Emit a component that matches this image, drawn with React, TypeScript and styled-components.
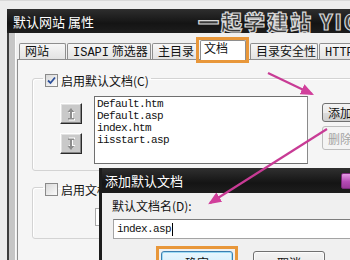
import React from "react";
import styled, { createGlobalStyle } from "styled-components";

const Global = createGlobalStyle`
  html, body { margin: 0; padding: 0; background: #ececec; }
  body {
    width: 350px; height: 260px; overflow: hidden;
    font-family: "Noto Sans CJK SC", "Liberation Sans", sans-serif;
  }
`;

const CJK = `"Noto Sans CJK SC", "Liberation Sans", sans-serif`;
const MONO = `"Liberation Mono", "Noto Sans CJK SC", monospace`;
const ORANGE = "#e8973a";

const Screen = styled.div`
  position: relative;
  width: 350px;
  height: 260px;
  overflow: hidden;
  box-sizing: border-box;
  padding: 8px 0 0 7px;
  background: #ececec;
  border-top: 1px solid #d8d8d8;
`;

const Window = styled.div`
  width: 440px;
  height: 300px;
  display: flex;
  flex-direction: column;
`;

const TitleBar = styled.div`
  flex: none;
  height: 24px;
  display: flex;
  align-items: center;
  padding-left: 6px;
  background: linear-gradient(#2e2e2e, #141414 60%, #1d1d1d);
  color: #fff;
  font-family: ${CJK};
  font-size: 13px;
  white-space: nowrap;
`;

const Watermark = styled.span`
  margin-left: 104px;
  font-family: ${CJK};
  font-size: 21px;
  font-weight: 900;
  letter-spacing: 2px;
  color: #3a3a3a;
  -webkit-text-stroke: 1.2px #d9d9d9;
  line-height: 24px;
`;

const WindowBody = styled.div`
  flex: 1;
  display: flex;
`;

const Frame = styled.div`
  flex: none;
  width: 6px;
  border-left: 2px solid #3d3d3d;
  border-right: 1px solid #fbfbfb;
  background: #c6c6c6;
`;

const Client = styled.div`
  flex: 1;
  display: flex;
  flex-direction: column;
  background: #f0f0f0;
  padding: 10px 0 0 1px;
`;

const TabStrip = styled.div`
  display: flex;
  align-items: flex-end;
  height: 16px;
  padding-left: 2px;
`;

const Tab = styled.div<{ $w: number; $ml: number; $active?: boolean }>`
  position: relative;
  box-sizing: border-box;
  flex: none;
  width: ${(p) => p.$w}px;
  margin-left: ${(p) => p.$ml}px;
  height: ${(p) => (p.$active ? 20 : 16)}px;
  margin-bottom: ${(p) => (p.$active ? -1 : 0)}px;
  z-index: ${(p) => (p.$active ? 2 : 1)};
  padding-left: ${(p) => (p.$active ? 3 : 5)}px;
  border: 1px solid #8e8e8e;
  border-bottom: none;
  border-radius: 2px 2px 0 0;
  background: ${(p) => (p.$active ? "#ffffff" : "linear-gradient(#f7f7f7, #e3e3e3)")};
  font-family: ${CJK};
  font-size: 12px;
  line-height: 14px;
  color: #111;
  white-space: nowrap;
  overflow: ${(p) => (p.$active ? "visible" : "hidden")};

  &::after {
    content: "";
    display: ${(p) => (p.$active ? "block" : "none")};
    position: absolute;
    left: -5px;
    right: -4px;
    top: -4px;
    bottom: -3px;
    border: 3px solid ${ORANGE};
  }
`;

const TabLatin = styled.span`
  font-family: ${MONO};
  font-size: 12px;
`;

const Panel = styled.div`
  flex: 1;
  border-top: 1px solid #8e8e8e;
  border-left: 1px solid #8e8e8e;
  background: #f5f5f5;
  padding: 14px 0 0 14px;
`;

const Group = styled.fieldset<{ $mt: number }>`
  margin: ${(p) => p.$mt}px 0 0 0;
  padding: 0;
  width: 400px;
  border: 1px solid #d3d3d3;
  border-radius: 3px;
  box-shadow: inset 1px 1px 0 #ffffff;
`;

const Legend = styled.legend`
  height: 8px;
  padding: 0 2px;
  margin-left: 10px;
  display: flex;
  align-items: flex-start;
  gap: 3px;
  overflow: visible;
  font-family: ${CJK};
  font-size: 12px;
  line-height: 13px;
  color: #111;
  white-space: nowrap;
`;

const Check = styled.span`
  flex: none;
  box-sizing: border-box;
  width: 13px;
  height: 13px;
  border: 1px solid #8a8a8a;
  background: linear-gradient(135deg, #d8d8d8, #fbfbfb);
  display: flex;
  align-items: center;
  justify-content: center;
`;

const GroupBody = styled.div<{ $h: number; $pt: number; $pl: number }>`
  box-sizing: border-box;
  height: ${(p) => p.$h}px;
  padding: ${(p) => p.$pt}px 0 0 ${(p) => p.$pl}px;
  display: flex;
  align-items: flex-start;
`;

const ArrowCol = styled.div`
  display: flex;
  flex-direction: column;
  gap: 9px;
  margin-top: 7px;
`;

const ArrowBtn = styled.div`
  box-sizing: border-box;
  width: 22px;
  height: 21px;
  border: 1px solid;
  border-color: #ffffff #2a2a2a #2a2a2a #ffffff;
  box-shadow: inset -1px -1px 0 #858585, inset 1px 1px 0 #e2e2e2;
  background: #c9c9c9;
  display: flex;
  align-items: center;
  justify-content: center;
`;

const ListBox = styled.div`
  box-sizing: border-box;
  width: 214px;
  height: 68px;
  margin-left: 12px;
  padding: 1px 2px;
  border: 1px solid #6f6f6f;
  border-right-color: #8a8a8a;
  background: #ffffff;
  font-family: ${MONO};
  font-size: 11px;
  letter-spacing: -0.6px;
  line-height: 12px;
  color: #111;
`;

const SideCol = styled.div`
  display: flex;
  flex-direction: column;
  gap: 4px;
  margin: 7px 0 0 14px;
`;

const SideBtn = styled.div<{ $h: number; $disabled?: boolean }>`
  box-sizing: border-box;
  width: 76px;
  height: ${(p) => p.$h}px;
  padding-left: 5px;
  border: 1px solid ${(p) => (p.$disabled ? "#bdbdbd" : "#707070")};
  border-radius: 3px;
  background: ${(p) =>
    p.$disabled ? "#f4f4f4" : "linear-gradient(#f3f3f3, #ebebeb 50%, #dcdcdc 51%, #cfcfcf)"};
  color: ${(p) => (p.$disabled ? "#a3a3a3" : "#111")};
  font-family: ${CJK};
  font-size: 12px;
  display: flex;
  align-items: center;
  white-space: nowrap;
`;

const FooterInput = styled.div`
  box-sizing: border-box;
  width: 250px;
  height: 18px;
  border: 1px solid #a9a9a9;
  background: #ffffff;
`;

const Dialog = styled.div`
  position: absolute;
  left: 99px;
  top: 167px;
  width: 270px;
  height: 110px;
  border-left: 3px solid #1c1c1c;
  background: #f0f0f0;
  display: flex;
  flex-direction: column;
  z-index: 5;
`;

const DialogTitle = styled.div`
  flex: none;
  height: 25px;
  display: flex;
  align-items: center;
  padding-left: 3px;
  background: linear-gradient(#303030, #141414 60%, #1e1e1e);
  color: #fff;
  font-family: ${CJK};
  font-size: 13px;
  white-space: nowrap;
`;

const CloseBtn = styled.div`
  width: 22px;
  height: 14px;
  margin-left: auto;
  margin-right: 7px;
  border-radius: 2px;
  border: 1px solid #7a2a7a;
  background: linear-gradient(#e59ae5, #b54bb5 55%, #9b3a9b);
`;

const DialogBody = styled.div`
  padding: 5px 0 0 10px;
  display: flex;
  flex-direction: column;
  align-items: flex-start;
`;

const Label = styled.div`
  font-family: ${CJK};
  font-size: 12px;
  line-height: 15px;
  color: #111;
  white-space: nowrap;
`;

const Input = styled.div`
  box-sizing: border-box;
  margin: 6px 0 0 1px;
  width: 250px;
  height: 20px;
  padding-left: 3px;
  border: 1px solid #a4a4a4;
  border-top-color: #7d7d7d;
  background: #fff;
  display: flex;
  align-items: center;
  font-family: ${MONO};
  font-size: 11px;
  letter-spacing: -0.6px;
  color: #111;
`;

const Caret = styled.span`
  width: 1px;
  height: 13px;
  margin-left: 1px;
  background: #000;
`;

const ButtonRow = styled.div`
  display: flex;
  gap: 20px;
  margin: 12px 0 0 49px;
`;

const DlgButton = styled.div<{ $primary?: boolean }>`
  position: relative;
  box-sizing: border-box;
  width: 72px;
  height: 23px;
  border: 1px solid ${(p) => (p.$primary ? "#3c7fb1" : "#707070")};
  border-radius: 3px;
  box-shadow: ${(p) => (p.$primary ? "inset 0 0 0 1px #9fdcf5" : "inset 0 0 0 1px #fbfbfb")};
  background: ${(p) =>
    p.$primary
      ? "linear-gradient(#eaf6fd, #d9f0fc 50%, #bee6fd 51%, #a7d9f5)"
      : "linear-gradient(#f3f3f3, #ebebeb 50%, #dddddd 51%, #cfcfcf)"};
  font-family: ${CJK};
  font-size: 12px;
  color: #111;
  display: flex;
  justify-content: center;
  align-items: center;

  &::after {
    content: "";
    display: ${(p) => (p.$primary ? "block" : "none")};
    position: absolute;
    inset: -6px;
    border: 3px solid ${ORANGE};
  }
`;

const Annotations = styled.svg`
  position: absolute;
  left: 0;
  top: 0;
  width: 350px;
  height: 260px;
  pointer-events: none;
  z-index: 10;
`;

const CheckMark = () => (
  <svg width="9" height="9" viewBox="0 0 9 9">
    <path d="M1 4.5 L3.5 7 L8 1.5" stroke="#2b4f9a" strokeWidth="1.8" fill="none" />
  </svg>
);

const MoveIcon = ({ down }: { down?: boolean }) => {
  const d = "M6 1 L9.5 5 H7 V11 H9 V12.5 H3 V11 H5 V5 H2.5 Z";
  return (
    <svg width="12" height="14" viewBox="0 0 12 14" style={down ? { transform: "scaleY(-1)" } : undefined}>
      <path d={d} fill="#ffffff" transform="translate(1 1)" />
      <path d={d} fill="#8d8d8d" />
    </svg>
  );
};

const tabs = [
  { label: "网站", w: 47, ml: 0 },
  { label: "ISAPI 筛选器", w: 84, ml: 1 },
  { label: "主目录", w: 47, ml: 1 },
  { label: "文档", w: 46, ml: 1, active: true },
  { label: "目录安全性", w: 68, ml: 4 },
  { label: "HTTP 头", w: 60, ml: 1 },
];

const renderLabel = (s: string) =>
  s.split(/([A-Za-z]+)/).map((part, i) =>
    /[A-Za-z]/.test(part) ? <TabLatin key={i}>{part}</TabLatin> : <React.Fragment key={i}>{part}</React.Fragment>
  );

const docs = ["Default.htm", "Default.asp", "index.htm", "iisstart.asp"];

export default function App() {
  return (
    <>
      <Global />
      <Screen>
        <Window>
          <TitleBar>
            默认网站 属性
            <Watermark>一起学建站 YIQI</Watermark>
          </TitleBar>
          <WindowBody>
            <Frame />
            <Client>
              <TabStrip>
                {tabs.map((t) => (
                  <Tab key={t.label} $w={t.w} $ml={t.ml} $active={t.active}>
                    {renderLabel(t.label)}
                  </Tab>
                ))}
              </TabStrip>
              <Panel>
                <Group $mt={0}>
                  <Legend>
                    <Check>
                      <CheckMark />
                    </Check>
                    启用默认文档(C)
                  </Legend>
                  <GroupBody $h={88} $pt={14} $pl={27}>
                    <ArrowCol>
                      <ArrowBtn>
                        <MoveIcon />
                      </ArrowBtn>
                      <ArrowBtn>
                        <MoveIcon down />
                      </ArrowBtn>
                    </ArrowCol>
                    <ListBox>
                      {docs.map((d) => (
                        <div key={d}>{d}</div>
                      ))}
                    </ListBox>
                    <SideCol>
                      <SideBtn $h={19}>添加(D)...</SideBtn>
                      <SideBtn $h={24} $disabled>
                        删除(R)
                      </SideBtn>
                    </SideCol>
                  </GroupBody>
                </Group>
                <Group $mt={12}>
                  <Legend>
                    <Check />
                    启用文档页脚(O)
                  </Legend>
                  <GroupBody $h={47} $pt={17} $pl={62}>
                    <FooterInput />
                  </GroupBody>
                </Group>
              </Panel>
            </Client>
          </WindowBody>
        </Window>

        <Dialog>
          <DialogTitle>
            添加默认文档
            <CloseBtn />
          </DialogTitle>
          <DialogBody>
            <Label>默认文档名(D):</Label>
            <Input>
              index.asp
              <Caret />
            </Input>
            <ButtonRow>
              <DlgButton $primary>确定</DlgButton>
              <DlgButton>取消</DlgButton>
            </ButtonRow>
          </DialogBody>
        </Dialog>

        <Annotations viewBox="0 0 350 260">
          <defs>
            <marker id="head" markerWidth="6" markerHeight="5" refX="5" refY="2.5" orient="auto" markerUnits="strokeWidth">
              <path d="M0 0 L6 2.5 L0 5 Z" fill="#d13f9b" />
            </marker>
          </defs>
          <line x1="268" y1="72" x2="312" y2="93" stroke="#c83b95" strokeWidth="2.2" markerEnd="url(#head)" />
          <line x1="327" y1="128" x2="210" y2="202" stroke="#c83b95" strokeWidth="2.2" markerEnd="url(#head)" />
        </Annotations>
      </Screen>
    </>
  );
}
